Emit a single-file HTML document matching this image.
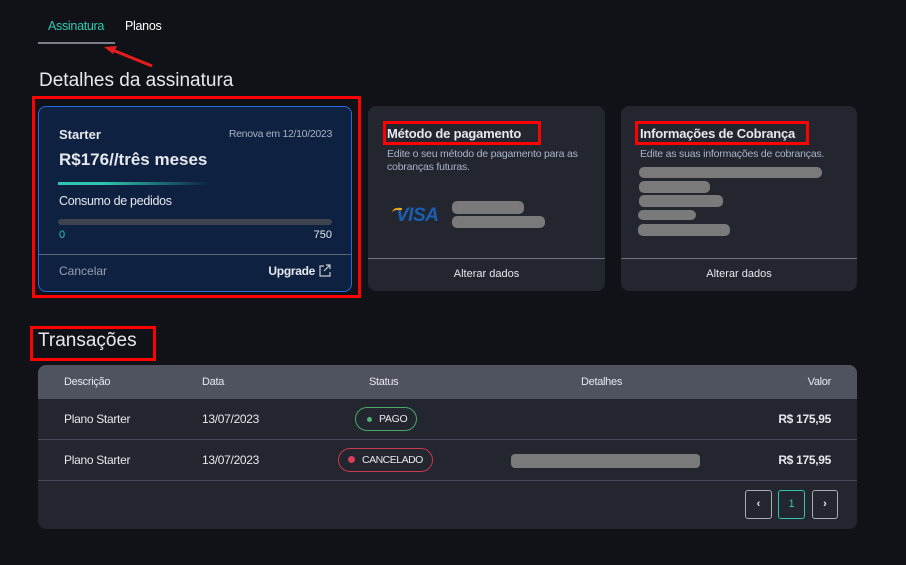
<!DOCTYPE html>
<html><head><meta charset="utf-8"><style>
*{box-sizing:border-box;margin:0;padding:0}
body{width:906px;height:565px;background:#111217;font-family:"Liberation Sans","DejaVu Sans",sans-serif;color:#e6e8ee;position:relative;overflow:hidden}
.a{position:absolute;white-space:nowrap}
.r{position:absolute;white-space:nowrap;text-align:right}
.card{position:absolute;background:#23252f;border-radius:8px}
.bar{position:absolute;background:#7a7a7a;border-radius:5px;height:12px}
.red{position:absolute;border:3px solid #f00}
.tc{font-size:12px;color:#e8e8ee;letter-spacing:-0.3px}
</style></head><body>
<div class="a" style="left:48px;top:19px;font-size:12.5px;color:#2ecbb0;letter-spacing:-0.3px">Assinatura</div>
<div class="a" style="left:125px;top:19px;font-size:12.5px;color:#fff;letter-spacing:-0.3px">Planos</div>
<div class="a" style="left:38px;top:42px;width:77px;height:2px;background:#7a7f8a"></div>
<svg class="a" style="left:100px;top:44px" width="56" height="26"><line x1="52" y1="22" x2="10" y2="5" stroke="#e31d1d" stroke-width="3"/><polygon points="4,3 17,2 13,10" fill="#e31d1d"/></svg>
<div class="a" style="left:39px;top:70px;font-size:19px;color:#e6e8ee">Detalhes da assinatura</div>

<div class="red" style="left:32px;top:96px;width:329px;height:202px"></div>
<div class="a" style="left:38px;top:106px;width:314px;height:186px;background:#0e2141;border:1px solid #2a6cdd;border-radius:8px"></div>
<div class="a" style="left:59px;top:127px;font-size:13px;font-weight:bold">Starter</div>
<div class="r" style="left:200px;width:132px;top:128px;font-size:10.5px;color:#a9b0c0;letter-spacing:-0.3px">Renova em 12/10/2023</div>
<div class="a" style="left:59px;top:150px;font-size:17px;font-weight:bold">R$176//três meses</div>
<div class="a" style="left:58px;top:182px;width:152px;height:3px;background:linear-gradient(90deg,#2ec4ad,#2ec4ad 30%,rgba(46,196,173,0))"></div>
<div class="a" style="left:59px;top:194px;font-size:12.5px;letter-spacing:-0.3px">Consumo de pedidos</div>
<div class="a" style="left:58px;top:219px;width:274px;height:6px;background:#3e4350;border-radius:3px"></div>
<div class="a" style="left:59px;top:229px;font-size:11px;color:#2ec4ad">0</div>
<div class="r" style="left:290px;width:42px;top:229px;font-size:11px">750</div>
<div class="a" style="left:39px;top:254px;width:312px;height:1px;background:#5d6678"></div>
<div class="a" style="left:59px;top:264px;font-size:12px;color:#9aa2b2">Cancelar</div>
<div class="r" style="left:240px;width:75px;top:264px;font-size:12px;font-weight:bold;letter-spacing:-0.3px">Upgrade</div>
<svg class="a" style="left:319px;top:264px" width="12" height="13"><path d="M5 2H1v10h10V8M7 1h4v4M11 1L5 7" stroke="#ccc" fill="none" stroke-width="1.2"/></svg>

<div class="card" style="left:368px;top:106px;width:237px;height:185px"></div>
<div class="red" style="left:383px;top:121px;width:158px;height:24px"></div>
<div class="a" style="left:387px;top:126px;font-size:13px;font-weight:bold;letter-spacing:-0.2px">Método de pagamento</div>
<div class="a" style="left:387px;top:148px;font-size:10.5px;color:#a9b4cc;line-height:13px;letter-spacing:-0.2px">Edite o seu método de pagamento para as<br>cobranças futuras.</div>
<div class="a" style="left:396px;top:205px;font-size:19px;font-weight:bold;font-style:italic;color:#1a5fb0;letter-spacing:-0.5px">VISA</div>
<div class="a" style="left:392px;top:208px;width:10px;height:5px;border-top:2px solid #f0a71e;border-radius:8px 0 0 0"></div>
<div class="bar" style="left:452px;top:201px;width:72px;height:13px"></div>
<div class="bar" style="left:452px;top:216px;width:93px"></div>
<div class="a" style="left:368px;top:258px;width:237px;height:1px;background:#6a7080"></div>
<div class="a" style="left:368px;top:268px;width:237px;text-align:center;font-size:11px">Alterar dados</div>

<div class="card" style="left:621px;top:106px;width:236px;height:185px"></div>
<div class="red" style="left:635px;top:121px;width:174px;height:24px"></div>
<div class="a" style="left:640px;top:126px;font-size:13px;font-weight:bold;letter-spacing:-0.2px">Informações de Cobrança</div>
<div class="a" style="left:640px;top:148px;font-size:10.5px;color:#a9b4cc;letter-spacing:-0.2px">Edite as suas informações de cobranças.</div>
<div class="bar" style="left:639px;top:167px;width:183px;height:11px"></div>
<div class="bar" style="left:639px;top:181px;width:71px"></div>
<div class="bar" style="left:639px;top:195px;width:84px"></div>
<div class="bar" style="left:638px;top:210px;width:58px;height:10px"></div>
<div class="bar" style="left:638px;top:224px;width:92px"></div>
<div class="a" style="left:621px;top:258px;width:236px;height:1px;background:#6a7080"></div>
<div class="a" style="left:621px;top:268px;width:236px;text-align:center;font-size:11px">Alterar dados</div>

<div class="red" style="left:30px;top:326px;width:126px;height:35px"></div>
<div class="a" style="left:38px;top:330px;font-size:19px;color:#e6e8ee">Transações</div>

<div class="card" style="left:38px;top:365px;width:819px;height:164px;overflow:hidden">
<div class="a" style="left:0;top:0;width:819px;height:34px;background:#4f5360"></div>
</div>
<div class="a tc" style="left:64px;top:376px;font-size:11px">Descrição</div>
<div class="a tc" style="left:202px;top:376px;font-size:11px">Data</div>
<div class="a tc" style="left:369px;top:376px;font-size:11px">Status</div>
<div class="a tc" style="left:581px;top:376px;font-size:11px">Detalhes</div>
<div class="r tc" style="left:780px;width:51px;top:376px;font-size:11px">Valor</div>

<div class="a tc" style="left:64px;top:412px">Plano Starter</div>
<div class="a tc" style="left:202px;top:412px">13/07/2023</div>
<div class="a" style="left:355px;top:407px;width:62px;height:24px;border:1px solid #4aa86a;border-radius:12px"></div>
<div class="a" style="left:367px;top:417px;width:5px;height:5px;border-radius:50%;background:#52b06f"></div>
<div class="a tc" style="left:379px;top:413px;font-size:10.5px">PAGO</div>
<div class="r tc" style="left:740px;width:91px;top:412px;font-weight:bold">R$ 175,95</div>
<div class="a" style="left:38px;top:439px;width:819px;height:1px;background:#454957"></div>

<div class="a tc" style="left:64px;top:453px">Plano Starter</div>
<div class="a tc" style="left:202px;top:453px">13/07/2023</div>
<div class="a" style="left:338px;top:448px;width:95px;height:24px;border:1px solid #c8384f;border-radius:12px"></div>
<div class="a" style="left:348px;top:456px;width:7px;height:7px;border-radius:50%;background:#d8405a"></div>
<div class="a tc" style="left:362px;top:454px;font-size:10.5px;letter-spacing:-0.5px">CANCELADO</div>
<div class="bar" style="left:511px;top:454px;width:189px;height:14px;border-radius:4px"></div>
<div class="r tc" style="left:740px;width:91px;top:453px;font-weight:bold">R$ 175,95</div>
<div class="a" style="left:38px;top:480px;width:819px;height:1px;background:#454957"></div>

<div class="a" style="left:745px;top:490px;width:27px;height:29px;border:1px solid #a8acb8;border-radius:3px;text-align:center;line-height:27px;font-size:11px;font-weight:bold">‹</div>
<div class="a" style="left:778px;top:490px;width:27px;height:29px;border:1px solid #2ec4ad;border-radius:3px;text-align:center;line-height:27px;font-size:11px;color:#2ec4ad">1</div>
<div class="a" style="left:812px;top:490px;width:26px;height:29px;border:1px solid #a8acb8;border-radius:3px;text-align:center;line-height:27px;font-size:11px;font-weight:bold">›</div>
</body></html>
